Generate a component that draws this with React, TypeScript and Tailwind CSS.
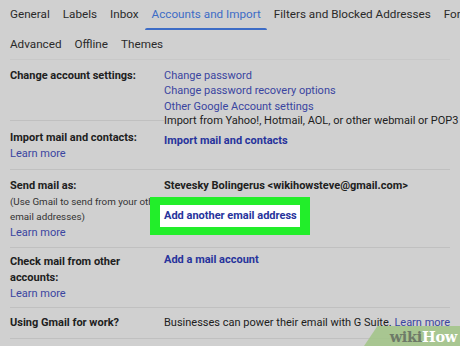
import React from 'react'

const TABS_TOP = ['General', 'Labels', 'Inbox', 'Accounts and Import', 'Filters and Blocked Addresses', 'Forwarding']
const TABS_BOTTOM = ['Advanced', 'Offline', 'Themes']

function Tab({ label, active }: { label: string; active?: boolean }) {
  return (
    <div className="relative shrink-0 px-[6.5px] h-[30px] flex items-center">
      <span className={active ? 'text-[#3d6cc6]' : 'text-[#2a2a2a]'}>{label}</span>
      {active && <span className="absolute left-0 right-0 bottom-[0px] h-[2.5px] bg-[#3d6cc6] rounded-t-sm" />}
    </div>
  )
}

function LearnMore() {
  return <div className="text-[#3a45a0] leading-[15.5px]">Learn more</div>
}

export default function App() {
  return (
    <div className="w-[460px] h-[346px] overflow-hidden bg-[#d0d0d0] relative font-['Roboto',sans-serif] text-[#202020]">
      {/* tabs */}
      <div className="flex pl-[3.5px] text-[11.7px] whitespace-nowrap">
        {TABS_TOP.map((t) => (
          <Tab key={t} label={t} active={t === 'Accounts and Import'} />
        ))}
      </div>
      <div className="flex pl-[3.5px] text-[11.7px] h-[29px] items-center">
        {TABS_BOTTOM.map((t) => (
          <div key={t} className="px-[6.5px] text-[#2a2a2a]">{t}</div>
        ))}
      </div>

      <div className="mx-[10px] border-t border-[#c8c8c8] text-[11px] leading-[15.4px]">
        {/* change account settings */}
        <div className="flex pt-[8px]">
          <div className="w-[154px] shrink-0 font-bold">Change account settings:</div>
          <div className="text-[#3a45a0]">
            <div>Change password</div>
            <div>Change password recovery options</div>
            <div>Other Google Account settings</div>
          </div>
        </div>

        {/* import */}
        <div className="flex mt-[6px]">
          <div className="w-[154px] shrink-0 border-t border-[#c0c0c0] pt-[9px] pb-[8px]">
            <div className="font-bold">Import mail and contacts:</div>
            <LearnMore />
          </div>
          <div className="-mt-[7px] whitespace-nowrap">
            <div>Import from Yahoo!, Hotmail, AOL, or other webmail or POP3</div>
            <div className="font-bold text-[#27339c] mt-[4px]">Import mail and contacts</div>
          </div>
        </div>

        {/* send mail as */}
        <div className="flex border-t border-[#c0c0c0] pt-[8px] pb-[7px] relative">
          <div className="w-[154px] shrink-0">
            <div className="font-bold">Send mail as:</div>
            <div className="text-[9.8px] leading-[15.5px] text-[#333] whitespace-nowrap">(Use Gmail to send from your other</div>
            <div className="text-[9.8px] leading-[15.5px] text-[#333]">email addresses)</div>
            <LearnMore />
          </div>
          <div className="relative z-10">
            <div className="font-bold whitespace-nowrap">Stevesky Bolingerus &lt;wikihowsteve@gmail.com&gt;</div>
            <div className="-ml-[14px] mt-[3px] w-[160px] h-[38px] bg-[#22ee2a] flex items-center pl-[10px]">
              <div className="bg-white h-[22px] w-[140px] flex items-center pl-[4px] font-bold text-[#27339c] whitespace-nowrap">
                Add another email address
              </div>
            </div>
          </div>
        </div>

        {/* check mail */}
        <div className="flex border-t border-[#c0c0c0] pt-[6px] pb-[5px]">
          <div className="w-[154px] shrink-0">
            <div className="font-bold leading-[16px]">Check mail from other</div>
            <div className="font-bold leading-[16px]">accounts:</div>
            <LearnMore />
          </div>
          <div className="font-bold text-[#27339c] -mt-[2px]">Add a mail account</div>
        </div>

        {/* gmail for work */}
        <div className="flex border-t border-b border-[#c0c0c0] pt-[7px] pb-[8px]">
          <div className="w-[154px] shrink-0 font-bold">Using Gmail for work?</div>
          <div className="whitespace-nowrap">
            Businesses can power their email with G Suite. <span className="text-[#3a45a0]">Learn more</span>
          </div>
        </div>
      </div>

      {/* watermark */}
      <div className="absolute right-0 bottom-0 w-[96px] h-[20px] overflow-hidden">
        <div className="absolute inset-0 bg-[#a3c48a] [clip-path:polygon(14%_0,100%_0,100%_100%,0_100%)] opacity-90" />
        <div className="absolute right-[3px] bottom-[1px] font-['DejaVu_Serif',serif] font-bold text-[14.5px] leading-[17px] tracking-[-0.3px]">
          <span className="text-[#6e7a68]">wiki</span>
          <span className="text-white">How</span>
        </div>
      </div>
    </div>
  )
}
